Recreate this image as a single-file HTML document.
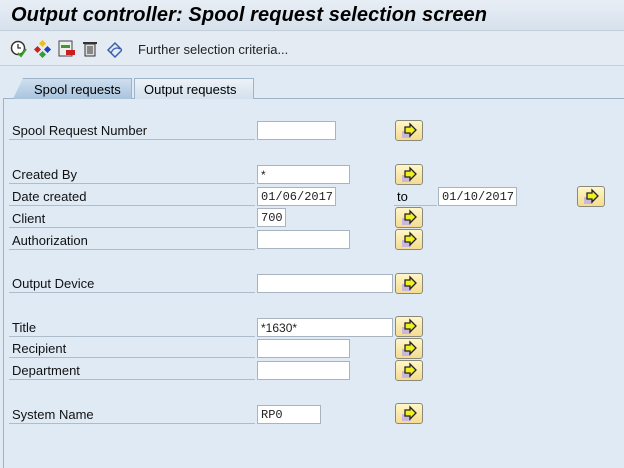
<!DOCTYPE html>
<html><head><style>
*{margin:0;padding:0;box-sizing:border-box}
body{width:624px;height:457px;overflow:hidden;background:#dfeaf5;font-family:"Liberation Sans",Arial,sans-serif;position:relative}
.title{position:absolute;left:0;top:0;width:624px;height:31px;background:linear-gradient(#e8eef5,#d6e1ec);border-bottom:1px solid #c3cfdb}
.title span{position:absolute;left:11px;top:4px;font-size:20px;font-weight:bold;font-style:italic;color:#000;letter-spacing:0.1px}
.tb{position:absolute;left:0;top:32px;width:624px;height:34px;background:#e4ebf3;border-bottom:1px solid #c3cfdb}
.tb .t{position:absolute;left:138px;top:10px;font-size:13px;color:#222}
.tab{position:absolute;top:78px;height:21px;font-size:13px;padding-top:3px;border:1px solid #9fb3c8;border-bottom:none}
.panel{position:absolute;left:3px;top:98px;width:630px;height:370px;border-left:1px solid #9fb3c8;border-top:1px solid #9fb3c8;background:#dfeaf5}
.l{position:absolute;left:9px;width:246px;height:20px;font-size:13px;color:#111;border-bottom:1px solid #aebdcc;padding-top:3px;padding-left:3px}
.f{position:absolute;height:19px;background:#fff;border:1px solid #a8b4c0;font-size:12px;padding:2px 3px;color:#222}
.m{font-family:"Liberation Mono",monospace;font-size:12px}
.b{position:absolute;width:28px;height:21px;border:1px solid #8a8a7a;border-radius:3px;background:linear-gradient(#fff6c8,#f5dc90)}
</style></head><body>
<div class="title"><span>Output controller: Spool request selection screen</span></div>
<div class="tb">
<svg style="position:absolute;left:10px;top:8px" width="112" height="18">
<circle cx="8" cy="8" r="6.5" fill="#fff" stroke="#333" stroke-width="1.5"/><path d="M8 4v4h3" stroke="#333" fill="none" stroke-width="1.3"/><path d="M8 13l3 3 5-7" stroke="#3a9a2a" fill="none" stroke-width="2"/>
<g transform="translate(24,0)"><rect x="6" y="1" width="5" height="5" fill="#e8c020" transform="rotate(45 8.5 3.5)"/><rect x="1" y="7" width="5" height="5" fill="#d02020" transform="rotate(45 3.5 9.5)"/><rect x="11" y="7" width="5" height="5" fill="#2040c0" transform="rotate(45 13.5 9.5)"/><rect x="6" y="12" width="5" height="5" fill="#30a030" transform="rotate(45 8.5 14.5)"/></g>
<g transform="translate(48,0)"><rect x="1" y="1" width="13" height="15" fill="#eee" stroke="#444"/><rect x="3" y="5" width="9" height="3" fill="#3a9a2a"/><rect x="8" y="10" width="9" height="5" fill="#c82020"/></g>
<g transform="translate(72,0)"><rect x="3" y="4" width="10" height="12" fill="#ddd" stroke="#333"/><rect x="1" y="2" width="14" height="2" fill="#333"/><path d="M6 6v8M8 6v8M10 6v8" stroke="#333"/></g>
<g transform="translate(96,0)"><path d="M2 10l7-7 7 7-7 7z" fill="none" stroke="#3a5fb0" stroke-width="1.5"/><path d="M5 13c2-5 6-6 9-4" stroke="#3a5fb0" fill="none" stroke-width="1.3"/></g>
</svg>
<span class="t">Further selection criteria...</span></div>
<div class="panel"></div>
<div class="tab" style="left:13px;width:119px;background:linear-gradient(#cfdfee,#a9c4de);padding-left:20px;clip-path:polygon(10px 0,100% 0,100% 100%,0 100%)">Spool requests</div>
<div class="tab" style="left:134px;width:120px;background:linear-gradient(#edf2f8,#d3e0ec);padding-left:9px">Output requests</div>

<div class="l" style="top:120px">Spool Request Number</div>
<div class="f" style="left:257px;top:121px;width:79px"></div>
<div class="l" style="top:164px">Created By</div>
<div class="f" style="left:257px;top:165px;width:93px">*</div>
<div class="l" style="top:186px">Date created</div>
<div class="f m" style="left:257px;top:187px;width:79px">01/06/2017</div>
<span style="position:absolute;left:397px;top:189px;font-size:13px">to</span>
<div style="position:absolute;left:394px;top:205px;width:43px;border-bottom:1px solid #aebdcc"></div>
<div class="f m" style="left:438px;top:187px;width:79px">01/10/2017</div>
<div class="l" style="top:208px">Client</div>
<div class="f m" style="left:257px;top:208px;width:29px">700</div>
<div class="l" style="top:230px">Authorization</div>
<div class="f" style="left:257px;top:230px;width:93px"></div>
<div class="l" style="top:273px">Output Device</div>
<div class="f" style="left:257px;top:274px;width:136px"></div>
<div class="l" style="top:317px">Title</div>
<div class="f" style="left:257px;top:318px;width:136px">*1630*</div>
<div class="l" style="top:338px">Recipient</div>
<div class="f" style="left:257px;top:339px;width:93px"></div>
<div class="l" style="top:360px">Department</div>
<div class="f" style="left:257px;top:361px;width:93px"></div>
<div class="l" style="top:404px">System Name</div>
<div class="f m" style="left:257px;top:405px;width:64px">RP0</div>

<svg width="0" height="0" style="position:absolute"><defs><g id="ar"><rect x="6" y="10" width="9" height="7" fill="#c8b8dc"/><path d="M9 6h5V3l6 6-6 6v-3H9z" fill="#f0f020" stroke="#222" stroke-width="1.3"/></g></defs></svg>
<div class="b" style="left:395px;top:120px"><svg width="28" height="21"><use href="#ar"/></svg></div>
<div class="b" style="left:395px;top:164px"><svg width="28" height="21"><use href="#ar"/></svg></div>
<div class="b" style="left:577px;top:186px"><svg width="28" height="21"><use href="#ar"/></svg></div>
<div class="b" style="left:395px;top:207px"><svg width="28" height="21"><use href="#ar"/></svg></div>
<div class="b" style="left:395px;top:229px"><svg width="28" height="21"><use href="#ar"/></svg></div>
<div class="b" style="left:395px;top:273px"><svg width="28" height="21"><use href="#ar"/></svg></div>
<div class="b" style="left:395px;top:316px"><svg width="28" height="21"><use href="#ar"/></svg></div>
<div class="b" style="left:395px;top:338px"><svg width="28" height="21"><use href="#ar"/></svg></div>
<div class="b" style="left:395px;top:360px"><svg width="28" height="21"><use href="#ar"/></svg></div>
<div class="b" style="left:395px;top:403px"><svg width="28" height="21"><use href="#ar"/></svg></div>
</body></html>
